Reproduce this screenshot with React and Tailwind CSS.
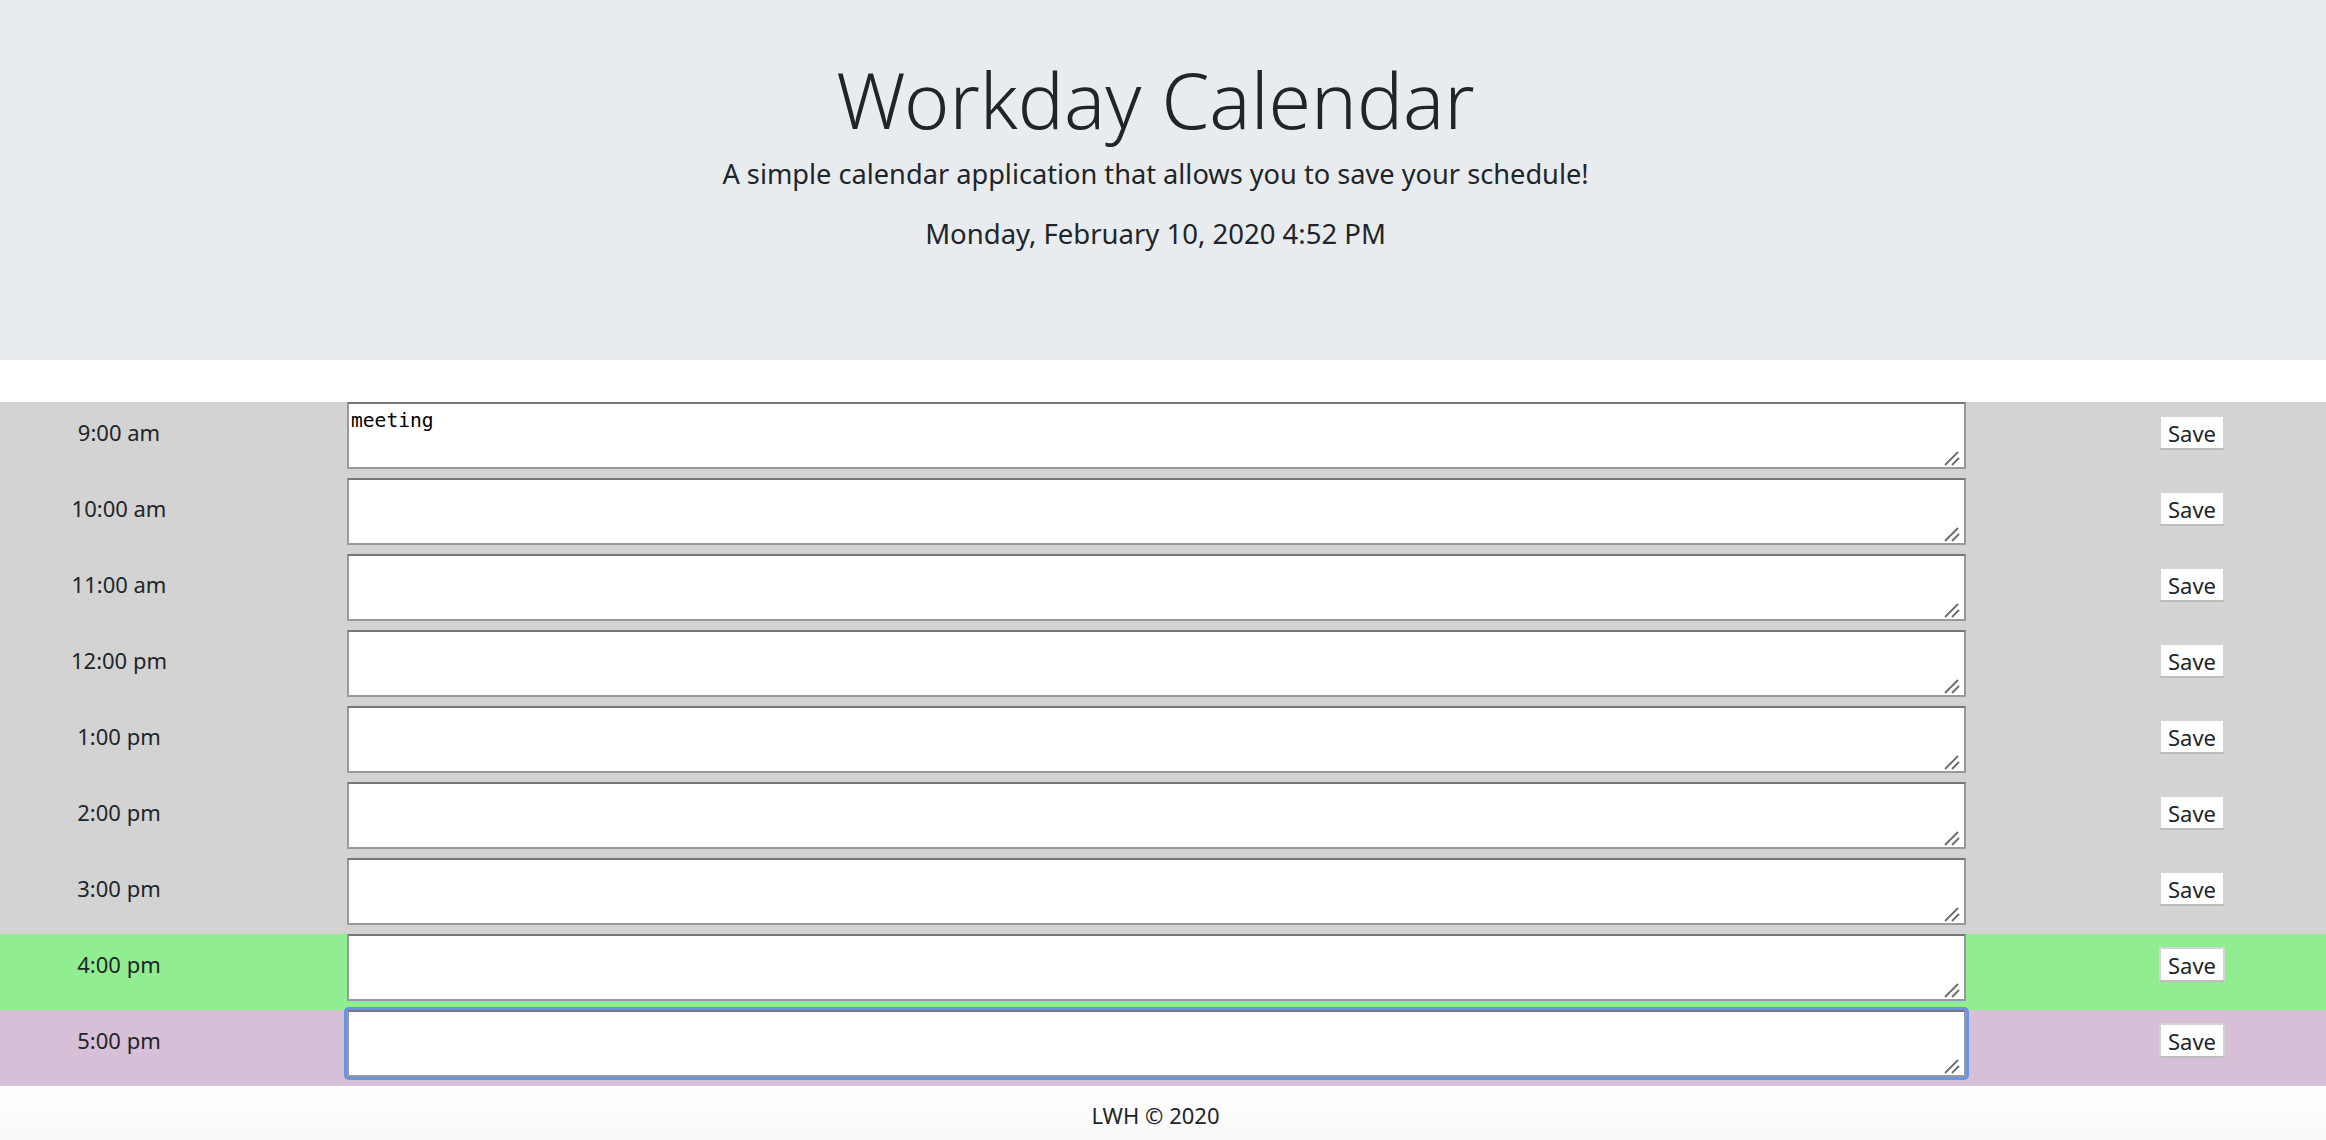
import React from 'react';

const hours = [
  { label: '9:00 am', tone: 'past', text: 'meeting' },
  { label: '10:00 am', tone: 'past' },
  { label: '11:00 am', tone: 'past' },
  { label: '12:00 pm', tone: 'past' },
  { label: '1:00 pm', tone: 'past' },
  { label: '2:00 pm', tone: 'past' },
  { label: '3:00 pm', tone: 'past' },
  { label: '4:00 pm', tone: 'present' },
  { label: '5:00 pm', tone: 'future', focused: true },
];

const toneBg = {
  past: 'bg-[#d3d3d3]',
  present: 'bg-[#90ee90]',
  future: 'bg-[#d8bfd8]',
};

// the big resize grip the zoomed browser drew in the corner
const Grip = () => (
  <svg className="absolute right-[3px] bottom-[2px] pointer-events-none" width="20" height="20" viewBox="0 0 20 20">
    <path d="M2 18 L15 5" stroke="#6a6a6a" strokeWidth="1.8" />
    <path d="M9 18 L16 11" stroke="#6a6a6a" strokeWidth="1.8" />
  </svg>
);

const HourRow = ({ hour }) => (
  <div className={`flex h-[76px] ${toneBg[hour.tone]}`}>
    <div className="w-[238px] h-[67px] pb-[6px] flex items-center justify-center text-[22px] text-[#212529]">
      {hour.label}
    </div>
    <div
      className={`relative ml-[109px] w-[1619px] h-[67px] ${
        hour.focused ? 'shadow-[0_0_0_3px_#6a93e3] rounded-[2px]' : ''
      }`}
    >
      <textarea
        defaultValue={hour.text || ''}
        className="block w-full h-full resize-none bg-white border-2 border-[#999] border-t-[#767676] px-[2px] pt-[5px] text-[19.6px] leading-[1.2] text-black outline-none"
        style={{ fontFamily: '"DejaVu Sans Mono", monospace' }}
      />
      <Grip />
    </div>
    <div className="ml-[193px] h-[67px] pb-[6px] flex items-center">
      <button className="w-[66px] h-[35px] bg-white border-2 border-[#d4d4d4] border-b-[#bdbdbd] text-[22px] leading-none text-[#212529]">
        Save
      </button>
    </div>
  </div>
);

const App = () => {
  return (
    <div className="min-h-[1140px] bg-white" style={{ fontFamily: '"Noto Sans", "Open Sans", sans-serif' }}>
      <header className="h-[360px] bg-[#e9ecef] text-[#212529] text-center pt-[53px] pr-[15px]">
        <h1 className="text-[77px] font-light leading-[94px]">Workday Calendar</h1>
        <p className="mt-[11px] text-[27.2px] leading-[32px]">
          A simple calendar application that allows you to save your schedule!
        </p>
        <p className="mt-[28px] text-[27.5px] leading-[32px]">Monday, February 10, 2020 4:52 PM</p>
      </header>
      <div className="mt-[42px]">
        {hours.map((h, idx) => (
          <HourRow key={idx} hour={h} />
        ))}
      </div>
      <footer className="h-[54px] pt-[5px] pr-[15px] flex items-center justify-center text-[22px] text-[#212529] bg-gradient-to-b from-white to-[#f9f9f9]">
        LWH © 2020
      </footer>
    </div>
  );
};

export default App;
